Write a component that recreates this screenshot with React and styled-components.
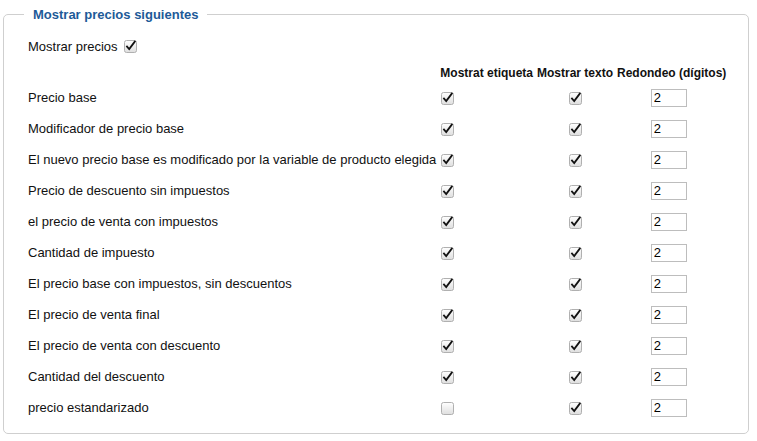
import React from 'react';
import styled, { createGlobalStyle } from 'styled-components';

const GlobalStyle = createGlobalStyle`
  body {
    margin: 0;
    background: #fff;
    font-family: "Liberation Sans", Arial, sans-serif;
    color: #111;
  }
`;

const Page = styled.div`
  padding: 7px 8px 7px 3px;
`;

const Fieldset = styled.fieldset`
  margin: 0;
  border: 1px solid #cfcfcf;
  border-radius: 5px;
  padding: 15px 10px 10px 24px;
  min-width: 0;
`;

const Legend = styled.legend`
  font-size: 13px;
  line-height: 15px;
  font-weight: bold;
  color: #1d5a98;
  padding: 0 9px;
  margin-left: -4px;
`;

const ShowRow = styled.div`
  display: flex;
  align-items: center;
  gap: 6px;
  height: 18px;
  font-size: 13px;
  margin-bottom: 9px;
`;

const Table = styled.table`
  border-collapse: collapse;
  margin-left: -2px;
  font-size: 13px;
`;

const Th = styled.th`
  font-size: 12px;
  font-weight: bold;
  height: 18px;
  padding: 0 2px;
  text-align: center;
  white-space: nowrap;
  vertical-align: middle;
`;

const Td = styled.td`
  height: 31px;
  padding: 0 2px;
  vertical-align: middle;
  text-align: ${(p) => p.$align || 'center'};
  white-space: nowrap;
`;

const BoxWrap = styled.span`
  display: inline-block;
  width: 13px;
  height: 13px;
  vertical-align: middle;
  margin-left: ${(p) => p.$indent || 0}px;
  svg {
    display: block;
    overflow: visible;
  }
`;

const DigitsInput = styled.input`
  box-sizing: border-box;
  width: 36px;
  height: 18px;
  margin: 0 6px 0 0;
  padding: 0 2px;
  border: 1px solid #bdbdbd;
  font-family: "Liberation Sans", Arial, sans-serif;
  font-size: 13px;
  color: #000;
  vertical-align: middle;
  outline: none;
`;

function CheckBox({ checked, indent }) {
  return (
    <BoxWrap $indent={indent}>
      <svg width="13" height="13" viewBox="0 0 13 13">
        <defs>
          <linearGradient id="cbg" x1="0" y1="0" x2="0" y2="1">
            <stop offset="0" stopColor="#ffffff" />
            <stop offset="1" stopColor="#dedede" />
          </linearGradient>
        </defs>
        <rect x="0.5" y="0.5" width="12" height="12" rx="2" fill="url(#cbg)" stroke="#b0b0b0" />
        {checked && (
          <path d="M3 6.6 L5.2 9 L10.8 1.6" fill="none" stroke="#111" strokeWidth="1.8" strokeLinecap="square" />
        )}
      </svg>
    </BoxWrap>
  );
}

const rows = [
  { label: 'Precio base', tag: true },
  { label: 'Modificador de precio base', tag: true },
  { label: 'El nuevo precio base es modificado por la variable de producto elegida', tag: true },
  { label: 'Precio de descuento sin impuestos', tag: true },
  { label: 'el precio de venta con impuestos', tag: true },
  { label: 'Cantidad de impuesto', tag: true },
  { label: 'El precio base con impuestos, sin descuentos', tag: true },
  { label: 'El precio de venta final', tag: true },
  { label: 'El precio de venta con descuento', tag: true },
  { label: 'Cantidad del descuento', tag: true },
  { label: 'precio estandarizado', tag: false },
];

export default function App() {
  return (
    <Page>
      <GlobalStyle />
      <Fieldset>
        <Legend>Mostrar precios siguientes</Legend>
        <ShowRow>
          Mostrar precios
          <CheckBox checked />
        </ShowRow>
        <Table>
          <thead>
            <tr>
              <Th />
              <Th>Mostrat etiqueta</Th>
              <Th>Mostrar texto</Th>
              <Th>Redondeo (dígitos)</Th>
            </tr>
          </thead>
          <tbody>
            {rows.map((r) => (
              <tr key={r.label}>
                <Td $align="left">{r.label}</Td>
                <Td $align="left"><CheckBox checked={r.tag} indent={1} /></Td>
                <Td><CheckBox checked /></Td>
                <Td><DigitsInput defaultValue="2" /></Td>
              </tr>
            ))}
          </tbody>
        </Table>
      </Fieldset>
    </Page>
  );
}
